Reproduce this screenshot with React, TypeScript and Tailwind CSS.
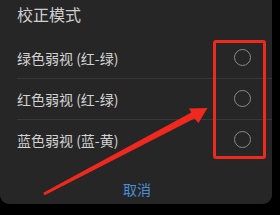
import React from "react";

const options = ["绿色弱视 (红-绿)", "红色弱视 (红-绿)", "蓝色弱视 (蓝-黄)"];

export default function App() {
  return (
    <div
      className="relative w-[280px] h-[215px] bg-black overflow-hidden"
      style={{ fontFamily: '"Noto Sans CJK SC", "Noto Sans", sans-serif' }}
    >
      <div className="w-[272px] h-[204px] bg-[#262626] rounded-b-[9px] flex flex-col">
        <div className="h-[28px] pl-[17px] text-[16px] leading-[28px] text-[#cfcfcf]">校正模式</div>
        <div className="mt-[10px] flex flex-col">
          {options.map((label) => (
            <div
              key={label}
              className="ml-[17px] h-[41px] pr-[21px] flex items-center justify-between border-b border-[#383838] last:border-b-0"
            >
              <span className="text-[14px] text-[#d2d2d2]">{label}</span>
              <span className="w-[17px] h-[17px] rounded-full border border-[#8a8a8a] -mt-[2px]" />
            </div>
          ))}
        </div>
        <div className="flex-1 flex items-end justify-center pb-[7px] pl-[2px]">
          <span className="text-[14px] leading-[16px] text-[#4a8fd6]">取消</span>
        </div>
      </div>

      {/* annotation overlay */}
      <div className="absolute left-[213px] top-[40px] w-[53px] h-[119px] border-[3px] border-[#ee2a1f] rounded-[3px]" />
      <svg className="absolute left-0 top-0" width="280" height="215" viewBox="0 0 280 215">
        <polygon
          points="43.3,192.7 191.3,112.4 189,108.4 207.5,108 198.5,123 194.5,118.6 44.7,195.3"
          fill="#f0281e"
        />
      </svg>
    </div>
  );
}
